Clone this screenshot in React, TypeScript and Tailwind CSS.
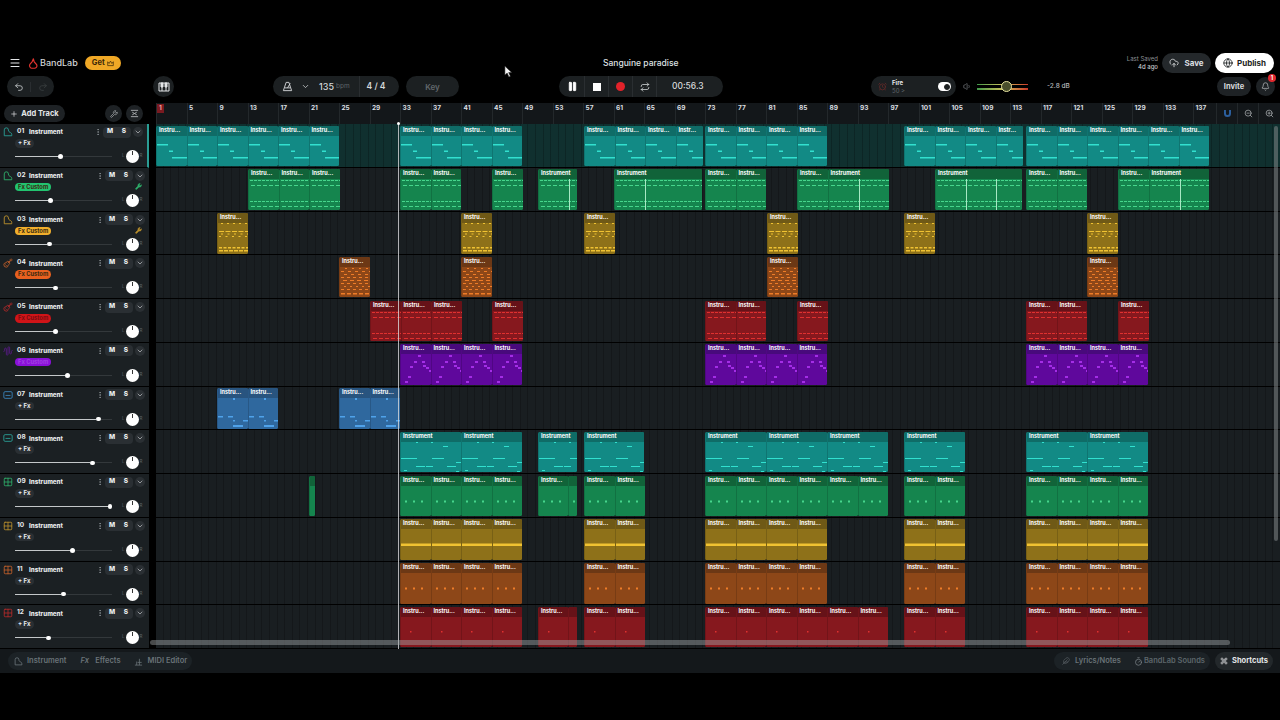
import React from 'react';
import {
  Menu, Undo2, Redo2, ChevronDown, Pause, Repeat, Volume1, CloudUpload, Globe, Bell,
  ZoomIn, ZoomOut, Plus, Wrench, Feather, Timer, Command, EllipsisVertical, Grid2x2, Guitar, AlarmClock, AudioWaveform,
} from 'lucide-react';

type Cell = { x: number; w: number; label?: string; mark?: number[] };
type Note = [number, number, number, number?];
type Theme = { head: string; body: string; fill: string; text: string; pill: string };

const theme: Record<string, Theme> = {
  teal: { head: 'bg-[#0f6c67]', body: 'bg-[#128a85]', fill: 'fill-[#32e0cf]', text: 'text-[#2a9d94]', pill: 'bg-[#2a9d94]' },
  green: { head: 'bg-[#116339]', body: 'bg-[#15854e]', fill: 'fill-[#46d68c]', text: 'text-[#2fae6a]', pill: 'bg-[#22c36f]' },
  gold: { head: 'bg-[#6f5916]', body: 'bg-[#8e7119]', fill: 'fill-[#f0c232]', text: 'text-[#b98f2c]', pill: 'bg-[#f0ae2c]' },
  orange: { head: 'bg-[#6c3815]', body: 'bg-[#8d4718]', fill: 'fill-[#ee7c28]', text: 'text-[#c4602a]', pill: 'bg-[#e8601f]' },
  red: { head: 'bg-[#661218]', body: 'bg-[#86181e]', fill: 'fill-[#e0302f]', text: 'text-[#b52a2a]', pill: 'bg-[#d01418]' },
  purple: { head: 'bg-[#480a7c]', body: 'bg-[#5f089c]', fill: 'fill-[#a42ee6]', text: 'text-[#5c1a8c]', pill: 'bg-[#8a10d8]' },
  blue: { head: 'bg-[#28547f]', body: 'bg-[#2f689e]', fill: 'fill-[#4fa2ea]', text: 'text-[#3a82b8]', pill: 'bg-[#3a82b8]' },
};

const run = (x: number, n: number, w = 30.5): Cell[] =>
  Array.from({ length: n }, (_, i) => ({ x: x + i * w, w, label: w > 40 ? 'Instrument' : 'Instru...' }));

const one = (x: number, w: number, label?: string, mark?: number[]): Cell => ({ x, w, label, mark });

const dashes = (w: number, y: number, dash: number, gap: number, start = 1, h = 1): Note[] => {
  const out: Note[] = [];
  for (let x = start; x < w - 1; x += dash + gap) out.push([x, y, dash, h]);
  return out;
};

const patterns: Record<string, (w: number) => Note[]> = {
  steps: () => [[0, 18, 11, 1.5], [12, 24.5, 4, 1.5], [15, 31, 15, 1.5]],
  lines: (w) => [
    ...dashes(w, 11, 3, 1), ...dashes(w, 16, 4, 2, 2), ...dashes(w, 32, 3, 1), ...dashes(w, 37, 4, 2, 2),
  ],
  zig: (w) => [
    ...dashes(w, 10, 2, 4, 3), ...dashes(w, 18, 5, 1.5), ...dashes(w, 20.5, 2, 4.5, 3), ...dashes(w, 23, 2, 4.5, 1),
    ...dashes(w, 34, 3, 1.5, 1, 1.5), ...dashes(w, 37, 4, 1, 1, 1.5),
  ],
  scatter: (w) => [
    ...dashes(w, 11, 2, 5, 5), ...dashes(w, 14, 3, 4, 1), ...dashes(w, 17, 3, 4, 4), ...dashes(w, 20, 3, 3, 1),
    ...dashes(w, 23, 4, 3, 3), ...dashes(w, 26, 3, 3, 1), ...dashes(w, 29, 2, 4, 4), ...dashes(w, 32, 3, 3, 1),
    ...dashes(w, 36, 4, 2, 1, 1.5),
  ],
  peak: () => [
    [4, 37, 3, 2], [7, 32, 3, 2], [9, 22, 3, 2], [13, 17, 3, 2], [17, 11, 3, 2], [21, 17, 3, 2], [22, 21, 3, 2], [25, 23, 3, 2], [28, 26, 3, 2],
  ],
  blue: () => [
    [15, 10, 2, 2], [0, 28, 5, 1.5], [10, 28, 5, 1.5], [15, 32, 2, 1.5], [25, 32, 5, 1.5], [15, 37, 10, 2],
  ],
  sparse: () => [
    [15, 10, 2, 1], [30, 10, 2, 1], [42, 14, 5, 1], [0, 26, 16, 1], [31, 26, 12, 1], [55, 30, 6, 1], [15, 34, 9, 1], [25, 34, 7, 1], [46, 34, 9, 1], [3, 38, 3, 1], [55, 39, 3, 1],
  ],
  dots: () => [[4, 24.5, 2, 2], [12, 24.5, 2, 2], [20, 24.5, 2, 2]],
  bar: (w) => [[0, 24.5, w, 2.5]],
  dot: () => [[9, 24, 1.5, 1.5]],
};

const tracks: { num: string; color: string; pattern: string; slider: number; custom: boolean; wrench?: boolean; icon: string; cells: Cell[] }[] = [
  {
    num: '01', color: 'teal', pattern: 'steps', slider: 45, custom: false, icon: 'piano',
    cells: [...run(156, 6), ...run(400, 4), ...run(584, 3), one(675.5, 27, 'Instr...'), ...run(705, 4), ...run(904, 3), one(995.5, 27, 'Instr...'), ...run(1026, 6)],
  },
  {
    num: '02', color: 'green', pattern: 'lines', slider: 35, custom: true, wrench: true, icon: 'piano',
    cells: [
      ...run(248, 3), ...run(400, 2), ...run(492, 1), one(538, 39, 'Instrument', [30]), one(614, 88, 'Instrument', [30]), ...run(705, 2),
      ...run(797, 1), one(827.5, 61, 'Instrument', [30]), one(935, 87, 'Instrument', [30, 60]), ...run(1026, 2), ...run(1118, 1), one(1148.5, 60.5, 'Instrument', [30]),
    ],
  },
  {
    num: '03', color: 'gold', pattern: 'zig', slider: 34, custom: true, wrench: true, icon: 'piano',
    cells: [...run(217, 1), ...run(461, 1), ...run(584, 1), ...run(767, 1), ...run(904, 1), ...run(1087, 1)],
  },
  {
    num: '04', color: 'orange', pattern: 'scatter', slider: 40, custom: true, icon: 'guitar',
    cells: [...run(339, 1), ...run(461, 1), ...run(767, 1), ...run(1087, 1)],
  },
  {
    num: '05', color: 'red', pattern: 'lines', slider: 40, custom: true, icon: 'guitar',
    cells: [...run(370, 3), ...run(492, 1), ...run(705, 2), ...run(797, 1), ...run(1026, 2), ...run(1118, 1)],
  },
  {
    num: '06', color: 'purple', pattern: 'peak', slider: 52, custom: true, icon: 'wave',
    cells: [...run(400, 4), ...run(705, 4), ...run(1026, 4)],
  },
  {
    num: '07', color: 'blue', pattern: 'blue', slider: 83, custom: false, icon: 'keys',
    cells: [...run(217, 2), ...run(339, 2)],
  },
  {
    num: '08', color: 'teal', pattern: 'sparse', slider: 77, custom: false, icon: 'keys',
    cells: [...run(400, 2, 61), one(538, 39, 'Instrument'), one(584, 60, 'Instrument'), ...run(705, 3, 61), ...run(904, 1, 61), ...run(1026, 2, 61)],
  },
  {
    num: '09', color: 'green', pattern: 'dots', slider: 97, custom: false, icon: 'grid',
    cells: [one(309, 6), ...run(400, 4), one(538, 30, 'Instru...'), one(568, 9), ...run(584, 2), ...run(705, 6), ...run(904, 2), ...run(1026, 4)],
  },
  {
    num: '10', color: 'gold', pattern: 'bar', slider: 57, custom: false, icon: 'grid',
    cells: [...run(400, 4), ...run(584, 2), ...run(705, 4), ...run(904, 2), ...run(1026, 4)],
  },
  {
    num: '11', color: 'orange', pattern: 'dots', slider: 48, custom: false, icon: 'grid',
    cells: [...run(400, 4), ...run(584, 2), ...run(705, 4), ...run(904, 2), ...run(1026, 4)],
  },
  {
    num: '12', color: 'red', pattern: 'dot', slider: 33, custom: false, icon: 'grid',
    cells: [...run(400, 4), one(538, 30, 'Instru...'), one(568, 9), ...run(584, 2), ...run(705, 6), ...run(904, 2), ...run(1026, 4)],
  },
];

const bars = Array.from({ length: 35 }, (_, i) => i * 4 + 1);

const PianoIcon = ({ className }: { className: string }) => (
  <svg viewBox="0 0 12 12" fill="none" stroke="currentColor" strokeWidth="1.1" className={className}>
    <path d="M1.5 10.5V3.5a2.5 2.5 0 0 1 5 0c0 2 1 2.5 2.5 3.2 1 .5 1.5 1.2 1.5 2.3v1.5z" strokeLinejoin="round" />
  </svg>
);

const KeyboardIcon = ({ className }: { className: string }) => (
  <svg viewBox="0 0 12 12" fill="none" stroke="currentColor" strokeWidth="1.1" className={className}>
    <rect x="1" y="2" width="10" height="8" rx="1.5" />
    <path d="M3 6.5h6" />
  </svg>
);

const TrackIcon = ({ icon, className }: { icon: string; className: string }) => {
  if (icon === 'piano') return <PianoIcon className={className} />;
  if (icon === 'guitar') return <Guitar className={className} strokeWidth={2} />;
  if (icon === 'wave') return <AudioWaveform className={className} strokeWidth={2} />;
  if (icon === 'keys') return <KeyboardIcon className={className} />;
  return <Grid2x2 className={className} strokeWidth={2} />;
};

const Metronome = () => (
  <svg viewBox="0 0 12 12" fill="none" stroke="currentColor" strokeWidth="1" className="h-[11px] w-[11px] text-[#d5d8da]">
    <path d="M4.5 1.5h3L10.5 10.5h-9z" strokeLinejoin="round" />
    <path d="M3 7.5h6M6 7.5l3-5" />
  </svg>
);

const KeysIcon = () => (
  <svg viewBox="0 0 12 12" fill="none" stroke="currentColor" strokeWidth="1" className="h-[12px] w-[12px] text-[#e4e6e8]">
    <path d="M1 2h10v8H1zM4 10V6M8 10V6" />
    <path d="M3 2h2v4H3zM7 2h2v4H7z" fill="currentColor" />
  </svg>
);

const Logo = () => (
  <svg viewBox="0 0 12 14" fill="none" stroke="#e2342f" strokeWidth="1.5" className="h-[11px] w-[10px]">
    <path d="M6.5 1 5 4.5 2 8a3.6 3.6 0 0 0 .6 4.2c.5.5 1 .8 1.6.8h3.8c1.8 0 3.2-1.5 3-3.3-.1-1-.6-1.7-1.3-2.4L7.5 5z" strokeLinejoin="round" />
  </svg>
);

const Clip = ({ cell, color, pattern }: { cell: Cell; color: string; pattern: string }) => {
  const t = theme[color];
  const notes = patterns[pattern](cell.w);
  return (
    <div
      className={`absolute top-[1.5px] h-[40.5px] overflow-hidden rounded-[1.5px] border-l border-black/15 ${t.body}`}
      style={{ left: cell.x - 156, width: cell.w }}
    >
      <div className={`h-[10px] pl-[2px] text-[5.5px] font-bold leading-[9px] text-white ${t.head}`}>
        {cell.label}
      </div>
      {cell.w > 7 && (
        <svg className="absolute left-0 top-0 h-full w-full">
          {notes.map((n, i) => (
            <rect key={i} x={n[0]} y={n[1]} width={n[2]} height={n[3] ?? 1.5} className={t.fill} />
          ))}
        </svg>
      )}
      {cell.mark?.map((m) => (
        <div key={m} className="absolute top-[10px] h-[31px] w-px bg-[#a8e8c4]" style={{ left: m }} />
      ))}
    </div>
  );
};

const TrackHeader = ({ t, selected }: { t: (typeof tracks)[number]; selected: boolean }) => {
  const th = theme[t.color];
  return (
    <div className={`flex h-full w-[149px] shrink-0 flex-col border-b border-black bg-[#1b2023] pl-[3px] pr-[4px] ${selected ? 'border-r-2 border-r-[#2a9d94]' : ''}`}>
      <div className="mt-[1.5px] flex h-[13px] items-center">
        <TrackIcon icon={t.icon} className={`h-[10px] w-[10px] shrink-0 ${th.text}`} />
        <span className="ml-[4px] w-[12px] text-[6.5px] font-bold text-[#e8eaec]">{t.num}</span>
        <span className="text-[6.2px] font-extrabold text-[#e8eaec]">Instrument</span>
        <EllipsisVertical className="ml-auto h-[8px] w-[8px] text-[#9aa0a4]" />
        <div className="ml-[1px] flex h-[11px] w-[28px] items-center justify-around rounded-[4px] bg-[#2a2f33] text-[6.5px] font-extrabold text-[#eceef0]">
          <span>M</span>
          <span>S</span>
        </div>
        <span className="ml-[2.5px] flex h-[10px] w-[10px] items-center justify-center rounded-full bg-[#2a2f33]">
          <ChevronDown className="h-[8px] w-[8px] text-[#c8cccf]" />
        </span>
      </div>
      <div className="relative flex h-[9.5px] items-center pl-[12px]">
        {t.custom ? (
          <span className={`rounded-full px-[3px] text-[5.8px] font-bold leading-[8.5px] ${th.pill} ${t.color === 'purple' ? 'text-[#a040e0]' : t.color === 'red' ? 'text-[#7a0c10]' : 'text-[#3a2a10]'}`}>
            Fx Custom
          </span>
        ) : (
          <span className="rounded-full bg-[#2a2f33] px-[3px] text-[6px] font-bold leading-[8.5px] text-[#e8eaec]">+ Fx</span>
        )}
        {t.wrench && <Wrench className={`absolute right-[3px] top-[1px] h-[7px] w-[7px] ${th.text}`} fill="currentColor" />}
      </div>
      <div className="mt-[1px] flex h-[15px] items-center">
        <div className="ml-[12px] flex w-[97px] items-center">
          <div className="h-px bg-[#c4c8ca]" style={{ width: t.slider - 2 }} />
          <div className="h-[4.5px] w-[4.5px] shrink-0 rounded-full bg-white" />
          <div className="h-px flex-1 bg-[#33383b]" />
        </div>
        <span className="ml-[10px] text-[4.5px] text-[#5d6367]">L</span>
        <div className="mx-[1px] flex h-[13px] w-[13px] shrink-0 justify-center rounded-full bg-white pt-[1px]">
          <div className="h-[4px] w-[1px] bg-[#333]" />
        </div>
        <span className="text-[4.5px] text-[#5d6367]">R</span>
      </div>
    </div>
  );
};

const Pill = ({ className, children }: { className: string; children: React.ReactNode }) => (
  <div className={`flex h-[21px] items-center rounded-full bg-[#1c2022] ${className}`}>{children}</div>
);

const App: React.FC = () => {
  return (
    <div className="relative flex h-[720px] w-[1280px] flex-col overflow-hidden bg-black pt-[53px] [font-family:Inter,sans-serif]">
      {/* title row */}
      <div className="relative flex h-[20px] items-center pl-[9px] pr-[6px]">
        <Menu className="h-[12px] w-[12px] text-[#e4e6e8]" />
        <div className="ml-[7px]"><Logo /></div>
        <span className="ml-[2px] text-[9px] font-medium text-[#d4d6d8]">BandLab</span>
        <div className="ml-[7px] flex h-[14px] w-[36px] items-center justify-center gap-[2px] rounded-full bg-[#f0a826] text-[7.5px] font-bold text-[#3a2608]">
          Get
          <svg viewBox="0 0 10 10" fill="none" stroke="currentColor" strokeWidth="1" className="h-[7px] w-[7px]"><path d="M1 2.5 3 5l2-3.5L7 5l2-2.5V8H1z" strokeLinejoin="round" /></svg>
        </div>
        <span className="absolute left-[603px] text-[8.5px] font-medium text-[#dfe1e3]">Sanguine paradise</span>
        <div className="ml-auto flex flex-col items-end text-[6px] leading-[8px]">
          <span className="text-[#8c9094]">Last Saved</span>
          <span className="font-medium text-[#c6c9cb]">4d ago</span>
        </div>
        <div className="ml-[4px] flex h-[20px] w-[49px] items-center justify-center gap-[5px] rounded-full bg-[#24282b] text-[8px] font-bold text-[#dcdee0]">
          <CloudUpload className="h-[10px] w-[10px]" />
          Save
        </div>
        <div className="ml-[4px] flex h-[20px] w-[59px] items-center justify-center gap-[4px] rounded-full bg-white text-[8px] font-bold text-[#1c1f22]">
          <Globe className="h-[10px] w-[10px]" />
          Publish
        </div>
      </div>

      {/* toolbar */}
      <div className="mt-[3px] flex h-[21px] items-center">
        <Pill className="ml-[7px] w-[47px]">
          <div className="flex w-[24px] justify-center border-r border-[#2a2e31]"><Undo2 className="h-[10px] w-[10px] text-[#c4c8ca]" /></div>
          <div className="flex w-[23px] justify-center"><Redo2 className="h-[10px] w-[10px] text-[#3a3e41]" /></div>
        </Pill>
        <Pill className="ml-[99px] w-[21px] justify-center"><KeysIcon /></Pill>
        <Pill className="ml-[99px] w-[126px] text-[#d5d8da]">
          <div className="ml-[9px]"><Metronome /></div>
          <ChevronDown className="ml-[8px] h-[9px] w-[9px]" />
          <span className="ml-[9px] text-[9px] font-medium">135</span>
          <span className="ml-[2px] text-[6.5px] text-[#5f6569]">bpm</span>
          <div className="ml-[9px] h-[21px] w-px bg-[#2a2e31]" />
          <span className="ml-[7px] text-[8.5px] font-semibold">4 / 4</span>
        </Pill>
        <Pill className="ml-[7px] w-[53px] justify-center text-[8px] font-semibold text-[#62686c]">Key</Pill>
        <Pill className="ml-[100px] w-[164px] text-white">
          <div className="flex h-full w-[26px] items-center justify-center border-r border-[#2a2e31] pl-[2px]"><Pause className="h-[11px] w-[11px]" fill="currentColor" /></div>
          <div className="flex h-full w-[24px] items-center justify-center border-r border-[#2a2e31]"><div className="h-[8px] w-[8px] bg-white" /></div>
          <div className="flex h-full w-[24px] items-center justify-center border-r border-[#2a2e31]"><div className="h-[9.5px] w-[9.5px] rounded-full bg-[#e2222a]" /></div>
          <div className="flex h-full w-[24px] items-center justify-center border-r border-[#2a2e31]"><Repeat className="h-[10px] w-[10px] text-[#c8ccce]" /></div>
          <span className="ml-[15px] text-[8.5px] font-medium text-[#d8dadc]">00:56.3</span>
        </Pill>
        <Pill className="ml-[148px] w-[85px]">
          <AlarmClock className="ml-[7px] h-[9px] w-[9px] text-[#6a2a28]" />
          <div className="ml-[5px] flex flex-col text-[6px] leading-[8px]">
            <span className="font-bold text-[#e4e6e8]">Fire</span>
            <span className="text-[#62686c]">50 &gt;</span>
          </div>
          <div className="ml-auto mr-[5px] flex h-[9px] w-[13px] items-center justify-end rounded-full bg-white pr-[1px]">
            <div className="h-[6px] w-[6px] rounded-full border-[1.5px] border-[#222] bg-[#1c2022]" />
          </div>
        </Pill>
        <Volume1 className="ml-[7px] h-[9px] w-[9px] text-[#6d7276]" />
        <div className="relative ml-[5px] flex h-[6px] w-[51px] flex-col justify-between">
          <div className="h-[1.5px] bg-gradient-to-r from-[#3f9a4a] via-[#c8c05a] to-[#c8352a]" />
          <div className="h-[1.5px] bg-gradient-to-r from-[#3f9a4a] via-[#c8c05a] to-[#c8352a]" />
          <div className="absolute left-[24px] top-[-2.5px] h-[11px] w-[11px] rounded-full border border-[#e6e2a0] bg-[#4a4f2c]" />
        </div>
        <span className="ml-[19px] text-[6.5px] font-medium text-[#b8bbbd]">-2.8 dB</span>
        <div className="ml-auto mr-[5px] flex items-center">
          <div className="flex h-[19px] w-[34px] items-center justify-center rounded-full bg-[#1e2225] text-[7.5px] font-bold text-[#d8dadc]">Invite</div>
          <div className="relative ml-[5px] flex h-[19px] w-[19px] items-center justify-center rounded-full bg-[#1e2225]">
            <Bell className="h-[9px] w-[9px] text-[#b0b4b7]" />
            <span className="absolute right-[-1px] top-[-3px] flex h-[8px] w-[8px] items-center justify-center rounded-full bg-[#e2282e] text-[5.5px] font-bold text-white">1</span>
          </div>
        </div>
      </div>

      {/* ruler row */}
      <div className="mt-[6px] flex h-[21px] shrink-0">
        <div className="flex w-[149px] shrink-0 items-center pl-[4px]">
          <div className="flex h-[17px] w-[61px] items-center justify-center gap-[3px] rounded-full bg-[#1e2225] text-[7.5px] font-bold text-[#e4e6e8]">
            <Plus className="h-[8px] w-[8px]" />
            Add Track
          </div>
          <div className="ml-[40px] flex h-[17px] w-[17px] items-center justify-center rounded-full bg-[#1e2225]">
            <Wrench className="h-[8px] w-[8px] text-[#b0b4b7]" />
          </div>
          <div className="ml-[4px] flex h-[17px] w-[17px] items-center justify-center rounded-full bg-[#1e2225]">
            <svg viewBox="0 0 10 10" fill="none" stroke="#c0c4c6" strokeWidth="0.9" className="h-[9px] w-[9px]"><path d="M1 1.5h8M1 8.5h8M2.5 3.5 5 5 2.5 6.5M7.5 3.5 5 5l2.5 1.5" /></svg>
          </div>
        </div>
        <div className="ml-[7px] flex w-[1060px] shrink-0 overflow-hidden bg-[#13171a]">
          {bars.map((b) => (
            <div key={b} className="h-full w-[30.5px] shrink-0 border-l border-[#23282b] pl-[1.5px] pt-[1px] text-[6.5px] font-bold leading-[9px] text-[#dcdfe1]">
              {b === 1 ? <span className="-ml-[1.5px] inline-block h-[9px] bg-[#7a1a20] px-[2px] text-[#f0a0a0]">1</span> : b}
            </div>
          ))}
        </div>
        <div className="flex flex-1 items-center bg-[#13171a] text-[#a8acaf]">
          <div className="flex h-full w-[21px] items-center justify-center border-l border-[#23282b]">
            <svg viewBox="0 0 10 10" fill="none" stroke="#2c5f9e" strokeWidth="2.2" className="h-[9px] w-[9px]"><path d="M2.2 1v4a2.8 2.8 0 0 0 5.6 0V1" /></svg>
          </div>
          <div className="flex h-full w-[21px] items-center justify-center border-l border-[#23282b]"><ZoomOut className="h-[9px] w-[9px]" /></div>
          <div className="flex h-full w-[22px] items-center justify-center border-l border-[#23282b]"><ZoomIn className="h-[9px] w-[9px]" /></div>
        </div>
      </div>

      {/* tracks */}
      <div className="relative flex flex-col">
        {tracks.map((t, i) => (
          <div key={t.num} className="flex h-[43.75px]">
            <TrackHeader t={t} selected={i === 0} />
            <div className={`relative ml-[7px] flex-1 border-b border-black bg-[repeating-linear-gradient(90deg,transparent_0,transparent_6.6px,rgba(0,0,0,0.22)_6.6px,rgba(0,0,0,0.22)_7.6px)] ${i === 0 ? 'bg-[#10302f]' : 'bg-[#191e21]'}`}>
              {t.cells.map((c) => (
                <Clip key={c.x} cell={c} color={t.color} pattern={t.pattern} />
              ))}
            </div>
          </div>
        ))}

        {/* playhead and scrollbars */}
        <div className="absolute left-[397.5px] top-0 h-full w-px bg-[#d8dadc]/80" />
        <div className="absolute left-[396.5px] top-[-2px] h-[3px] w-[3px] rounded-full bg-white" />
        <div className="absolute left-[150px] top-[516px] h-[5px] w-[1080px] rounded-full bg-[#a0a4a6]/45" />
        <div className="absolute left-[1274px] top-[2px] h-[415px] w-[4px] rounded-full bg-[#8a8e90]/50" />
      </div>

      {/* bottom bar */}
      <div className="flex h-[24px] shrink-0 items-center bg-[#14181b] pl-[8px] pr-[7px]">
        <div className="flex h-[18px] w-[184px] items-center rounded-full bg-[#1c2226] text-[7.5px] font-semibold text-[#6a7378]">
          <PianoIcon className="ml-[6px] h-[9px] w-[9px]" />
          <span className="ml-[4px]">Instrument</span>
          <span className="ml-[14px] italic">Fx</span>
          <span className="ml-[6px]">Effects</span>
          <svg viewBox="0 0 10 10" fill="none" stroke="currentColor" strokeWidth="0.9" className="ml-[13px] h-[9px] w-[9px]"><path d="M1 9h8M3 9V5M6 9V2M8.5 6H4" /></svg>
          <span className="ml-[5px]">MIDI Editor</span>
        </div>
        <div className="ml-auto flex h-[18px] w-[156px] items-center rounded-full bg-[#1c2226] text-[7.5px] font-semibold">
          <Feather className="ml-[8px] h-[8px] w-[8px] text-[#5a6166]" />
          <span className="ml-[5px] text-[#6a7378]">Lyrics/Notes</span>
          <Timer className="ml-[13px] h-[9px] w-[9px] text-[#7a8287]" />
          <span className="ml-[1px] text-[#5d666b]">BandLab Sounds</span>
        </div>
        <div className="ml-[5px] flex h-[18px] w-[58px] items-center justify-center gap-[4px] rounded-full bg-[#23282b] text-[7.5px] font-bold text-[#e4e6e8]">
          <Command className="h-[8px] w-[8px]" />
          Shortcuts
        </div>
      </div>

      {/* mouse cursor caught in the recording */}
      <svg viewBox="0 0 10 14" className="absolute left-[504px] top-[65px] h-[13px] w-[9px]">
        <path d="M1 1v10l2.5-2.2L5.5 13l1.6-.7L5.2 8.2H8.6z" fill="#f4f4f4" stroke="#222" strokeWidth="0.6" />
      </svg>
    </div>
  );
};

export default App;
